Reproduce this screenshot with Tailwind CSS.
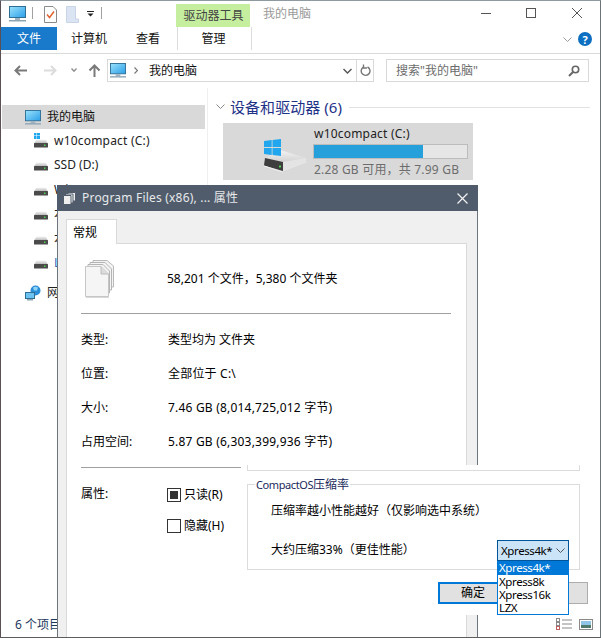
<!DOCTYPE html>
<html lang="zh-CN">
<head>
    <meta charset="UTF-8">
    <title>我的电脑</title>
    <script src="https://cdn.jsdelivr.net/npm/@tailwindcss/browser@4"></script>
</head>
<body class="bg-white">
<svg width="0" height="0" class="absolute">
    <defs>
        <linearGradient id="screen" x1="0" y1="0" x2="1" y2="1"><stop offset="0" stop-color="#9be3fb"/><stop offset="1" stop-color="#2a9ee8"/></linearGradient>
        <linearGradient id="driveTop" x1="0" y1="0" x2="0" y2="1"><stop offset="0" stop-color="#f4f4f4"/><stop offset="1" stop-color="#b5b5b5"/></linearGradient>
        <symbol id="monitor" viewBox="0 0 17 16">
            <rect x="0.5" y="0.5" width="16" height="11" fill="url(#screen)" stroke="#2f6f96"/>
            <rect x="6" y="12" width="5" height="2" fill="#9fb2bf"/>
            <rect x="0" y="14" width="17" height="1.5" fill="#8fa5b4"/>
        </symbol>
        <symbol id="drive" viewBox="0 0 14 9">
            <path d="M2.5 0.5H11.5L14 4.5H0Z" fill="url(#driveTop)"/>
            <rect x="0" y="4" width="14" height="4.5" rx="0.5" fill="#4a4a4a"/>
            <rect x="10" y="5.5" width="1.5" height="1.5" fill="#4fd04f"/>
        </symbol>
        <symbol id="pages" viewBox="0 0 30 38">
            <path d="M8 0.5H22L28.5 6V27H8Z" fill="#f3f3f3" stroke="#b9b9b9"/>
            <path d="M5 2.5H20L26.5 9V30H5Z" fill="#f5f5f5" stroke="#b4b4b4"/>
            <path d="M3 4.5H18L24.5 11V33H3Z" fill="#f3f3f3" stroke="#b4b4b4"/>
            <path d="M0.5 6.5H16L23.5 14V36.5H0.5Z" fill="#f5f5f5" stroke="#c6c6c6"/>
            <path d="M16 6.5V14H23.5" fill="#dcdcdc" stroke="#bdbdbd"/>
            <path d="M1 37.5H24" stroke="#d8d8d8"/>
        </symbol>
    </defs>
</svg>

<div class="relative w-[601px] h-[638px] overflow-hidden bg-white text-[12px] leading-none text-[#111] border-t border-t-[#8d9aa0] border-l border-l-[#5b5155] border-r border-r-[#6c7478] border-b border-b-[#5c5c5c] font-['Noto_Sans','Noto_Sans_CJK_SC',sans-serif]">

    <!-- title row -->
    <div class="flex h-[26px]">
        <svg class="ml-[8px] mt-[5px] w-[17px] h-[16px]"><use href="#monitor"/></svg>
        <div class="ml-[6px] mt-[6px] w-px h-[12px] bg-[#a0a0a0]"></div>
        <svg class="ml-[11px] mt-[5px]" width="13" height="17" viewBox="0 0 13 17">
            <path d="M0.5 0.5H9L12.5 4V16.5H0.5Z" fill="#fff" stroke="#8a8a8a"/>
            <path d="M3 8.5L5.5 11.5L10 5.5" fill="none" stroke="#e0602c" stroke-width="1.4"/>
        </svg>
        <svg class="ml-[9px] mt-[5px]" width="13" height="17" viewBox="0 0 13 17">
            <path d="M0.5 0.5H9.5V13H12.5V16.5H0.5Z" fill="#dbe4f2" stroke="#c9d4e6"/>
        </svg>
        <svg class="ml-[8px] mt-[10px]" width="7" height="6" viewBox="0 0 7 6">
            <rect x="0" y="0" width="7" height="1" fill="#222"/>
            <path d="M0.5 2.5H6.5L3.5 5.5Z" fill="#222"/>
        </svg>
        <div class="ml-[7px] mt-[6px] w-px h-[12px] bg-[#a0a0a0]"></div>
        <div class="ml-[74px] mt-[3px] w-[74px] h-[23px] bg-[#c5ee9f] flex items-center justify-center pl-[1px] text-[#444]">驱动器工具</div>
        <div class="ml-[13px] mt-[7px] text-[#9a9a9a]">我的电脑</div>
        <svg class="ml-auto mr-[18px] mt-[7px]" width="101" height="11" viewBox="0 0 101 11" fill="none" stroke="#555">
            <path d="M0 5.5H10"/>
            <rect x="45.5" y="0.5" width="9" height="9"/>
            <path d="M91 0L101 10M101 0L91 10"/>
        </svg>
    </div>

    <!-- ribbon tabs -->
    <div class="flex h-[23px] items-stretch">
        <div class="w-[56px] bg-[#1979ca] text-white flex items-center justify-center">文件</div>
        <div class="ml-[14px] w-[36px] flex items-center">计算机</div>
        <div class="ml-[29px] w-[24px] flex items-center">查看</div>
        <div class="ml-[17px] w-[75px] border-x border-[#dcdcdc] flex items-center justify-center pr-[2px]">管理</div>
        <svg class="ml-[311px] mt-[10px]" width="9" height="5" viewBox="0 0 9 5" fill="none" stroke="#9a9a9a"><path d="M0.5 0.5L4.5 4.5L8.5 0.5"/></svg>
        <div class="ml-[6px] mt-[5px] w-[14px] h-[14px] rounded-full bg-[#0d6fc2] text-white text-[11px] font-bold flex items-center justify-center">?</div>
    </div>

    <!-- nav bar -->
    <div class="mt-[3px] h-[35px] border-t border-[#dadada] flex pt-[5px]">
        <svg class="ml-[13px] mt-[6px]" width="13" height="11" viewBox="0 0 13 11" fill="none" stroke="#7a7a7a" stroke-width="2"><path d="M6 1L1.5 5.5L6 10M2 5.5H13"/></svg>
        <svg class="ml-[17px] mt-[6px]" width="13" height="11" viewBox="0 0 13 11" fill="none" stroke="#dcdcdc" stroke-width="2"><path d="M7 1L11.5 5.5L7 10M11 5.5H0"/></svg>
        <svg class="ml-[14px] mt-[9px]" width="6" height="4" viewBox="0 0 6 4" fill="none" stroke="#8a8a8a" stroke-width="1.3"><path d="M0.5 0.5L3 3.2L5.5 0.5"/></svg>
        <svg class="ml-[11px] mt-[5px]" width="13" height="13" viewBox="0 0 13 13" fill="none" stroke="#7a7a7a" stroke-width="2"><path d="M1.5 6.5L6.5 1.5L11.5 6.5M6.5 2V13"/></svg>
        <div class="ml-[6px] w-[267px] h-[23px] border border-[#d9d9d9] flex items-center">
            <svg class="ml-[2px] w-[16px] h-[15px]"><use href="#monitor"/></svg>
            <svg class="ml-[8px]" width="4" height="7" viewBox="0 0 4 7" fill="none" stroke="#777" stroke-width="1.2"><path d="M0.5 0.5L3.5 3.5L0.5 6.5"/></svg>
            <span class="ml-[11px]">我的电脑</span>
            <svg class="ml-auto mr-[4px]" width="9" height="6" viewBox="0 0 9 6" fill="none" stroke="#555" stroke-width="1.4"><path d="M0.5 1L4.5 5L8.5 1"/></svg>
            <div class="w-[17px] h-full border-l border-[#d9d9d9] flex items-center justify-center">
                <svg width="11" height="13" viewBox="0 0 11 13" fill="none" stroke="#777" stroke-width="1.4"><path d="M7.5 3A4.4 4.4 0 1 1 3 3.4M3.5 0.5V4H7"/></svg>
            </div>
        </div>
        <div class="ml-[12px] w-[203px] h-[23px] border border-[#d9d9d9] flex items-center text-[#6d6d6d]">
            <span class="ml-[9px]">搜索"我的电脑"</span>
            <svg class="ml-auto mr-[8px]" width="12" height="12" viewBox="0 0 12 12" fill="none" stroke="#666" stroke-width="1.6"><circle cx="7.5" cy="4.5" r="3.2"/><path d="M5 7L1 11" stroke-width="2"/></svg>
        </div>
    </div>

    <!-- main area -->
    <div class="flex h-[549px]">
        <!-- sidebar -->
        <div class="w-[207px] border-r border-[#efefef] pt-[17px]">
            <div class="ml-px w-[203px] h-[24px] bg-[#d9d9d9] flex items-center">
                <svg class="ml-[23px] w-[16px] h-[15px]"><use href="#monitor"/></svg>
                <span class="ml-[6px]">我的电脑</span>
            </div>
            <div class="h-[23px] flex items-center relative">
                <svg class="ml-[33px] w-[14px] h-[9px] mt-[5px]"><use href="#drive"/></svg>
                <svg class="absolute left-[33px] top-[4px]" width="6" height="6" viewBox="0 0 6 6" fill="#1ea7ef"><path d="M0 0H2.5V2.5H0ZM3 0H6V2.5H3ZM0 3H2.5V6H0ZM3 3H6V6H3Z"/></svg>
                <span class="ml-[6px] tracking-[0.2px] text-[#222]">w10compact (C:)</span>
            </div>
            <div class="h-[25px] flex items-center">
                <svg class="ml-[33px] w-[14px] h-[9px] mt-[3px]"><use href="#drive"/></svg>
                <span class="ml-[6px] text-[#222]">SSD (D:)</span>
            </div>
            <div class="h-[25px] flex items-center">
                <svg class="ml-[33px] w-[14px] h-[9px] mt-[3px]"><use href="#drive"/></svg>
                <span class="ml-[6px] text-[#222]">Win7 (E:)</span>
            </div>
            <div class="h-[24px] flex items-center">
                <svg class="ml-[33px] w-[14px] h-[9px] mt-[3px]"><use href="#drive"/></svg>
                <span class="ml-[6px] text-[#222]">本地磁盘 (F:)</span>
            </div>
            <div class="h-[25px] flex items-center">
                <svg class="ml-[33px] w-[14px] h-[9px] mt-[3px]"><use href="#drive"/></svg>
                <span class="ml-[6px] text-[#222]">本地磁盘 (G:)</span>
            </div>
            <div class="h-[24px] flex items-center">
                <svg class="ml-[33px] w-[14px] h-[9px] mt-[3px]"><use href="#drive"/></svg>
                <span class="ml-[6px] text-[#1f6fc0]">LZX (H:)</span>
            </div>
            <div class="mt-[6px] h-[24px] flex items-center">
                <svg class="ml-[24px]" width="16" height="16" viewBox="0 0 16 16">
                    <circle cx="10.5" cy="5.5" r="5" fill="#2a8fd8"/>
                    <path d="M8 2.5Q10.5 1 13 2.5L12 5.5L9 5.5Z" fill="#8fd3f5"/>
                    <rect x="0.5" y="7.5" width="9" height="6" fill="#6cc2f0" stroke="#2f6f96"/>
                    <rect x="2" y="14" width="6" height="1.5" fill="#8fa5b4"/>
                </svg>
                <span class="ml-[6px] text-[#222]">网络</span>
            </div>
        </div>

        <!-- content -->
        <div class="flex-1 pl-[7px]">
            <div class="h-[35px] flex items-center pt-[3px]">
                <svg class="ml-[1px]" width="9" height="6" viewBox="0 0 9 6" fill="none" stroke="#888"><path d="M0.5 0.5L4.5 4.5L8.5 0.5"/></svg>
                <span class="ml-[5px] text-[15px] tracking-[0.05px] text-[#1e3287]">设备和驱动器 (6)</span>
                <div class="ml-[7px] flex-1 mr-[10px] h-px bg-[#e2e2e2]"></div>
            </div>
            <div class="ml-[8px] w-[250px] h-[57px] bg-[#d9d9d9] flex">
                <div class="relative ml-[41px] mt-[16px] w-[43px] h-[33px]">
                    <svg class="absolute left-0 top-[11px]" width="43" height="23" viewBox="0 0 43 23">
                        <path d="M16 0L42 8V13L19 22L0 16L1 8Z" fill="url(#driveTop)"/>
                        <path d="M19 12L42 8V13L19 22Z" fill="#e4e4e4"/>
                        <path d="M1 8L19 12V21L0 15.5Z" fill="#3e3e3e"/>
                        <path d="M0 16L19 22" stroke="#f0f0f0"/>
                        <rect x="15" y="15.5" width="2" height="2" fill="#4fd04f"/>
                    </svg>
                    <svg class="absolute left-0 top-0" width="17" height="17" viewBox="0 0 17 17" fill="#22a7ee"><path d="M0 2L7.7 1V8H0ZM8.5 0.9L17 0V8H8.5ZM0 9H7.7V16L0 15ZM8.5 9H17V17L8.5 16Z"/></svg>
                </div>
                <div class="ml-[6px] flex-1">
                    <div class="mt-[4px] h-[14px] pl-[1px] flex items-center tracking-[0.2px] text-[#222]">w10compact (C:)</div>
                    <div class="mt-[3px] w-[155px] h-[15px] border border-[#bcbcbc] bg-[#e6e6e6]">
                        <div class="h-full bg-[#26a0da]" style="width:71%"></div>
                    </div>
                    <div class="mt-[4px] h-[14px] pl-[1px] flex items-center tracking-[0.2px] text-[#6d6d6d]">2.28 GB 可用，共 7.99 GB</div>
                </div>
            </div>
        </div>
    </div>

    <div class="absolute left-[14px] top-[618px] text-[#1e395b]">6 个项目</div>

    <!-- view toggle icons, bottom right -->
    <div class="absolute left-[555px] top-[617px] flex gap-[7px]">
        <svg width="16" height="13" viewBox="0 0 16 13" fill="none" stroke="#8a8a8a">
            <rect x="0.5" y="0.5" width="3" height="3"/><rect x="0.5" y="4.5" width="3" height="3"/><rect x="0.5" y="8.5" width="3" height="3" stroke="#c06060"/>
            <path d="M6 2H16M6 6H16M6 10H16"/>
        </svg>
        <svg width="14" height="11" viewBox="0 0 14 11" class="mt-px">
            <rect x="0.5" y="0.5" width="13" height="10" fill="#fff" stroke="#8a8a8a"/>
            <rect x="2" y="2" width="10" height="4" fill="#8fc6e8"/>
            <rect x="2" y="6" width="10" height="3" fill="#4f7a6a"/>
        </svg>
    </div>

    <!-- properties dialog -->
    <div class="absolute left-[56px] top-[184px] w-[421px] h-[460px] bg-[#f0f0f0] border-x border-[#6c7480]">
        <div class="-mx-px h-[26px] bg-[#505c6b] text-[#e6e8ea] flex items-center">
            <svg class="ml-[6px]" width="13" height="13" viewBox="0 0 13 13" fill="#eee" stroke="#505c6b">
                <path d="M5 0.5H12.5V9H5Z"/><path d="M2.5 2H10V11H2.5Z"/><path d="M0.5 3.5H8V12.5H0.5Z"/>
            </svg>
            <span class="ml-[6px] tracking-[0.2px]">Program Files (x86), ... 属性</span>
            <svg class="ml-auto mr-[10px]" width="11" height="11" viewBox="0 0 11 11" fill="none" stroke="#f2f2f2" stroke-width="1.2"><path d="M0.5 0.5L10.5 10.5M10.5 0.5L0.5 10.5"/></svg>
        </div>
        <div class="pl-[8px] pt-[8px] pr-[10px]">
            <div class="flex h-[25px]">
                <div class="relative z-10 w-[51px] h-[25px] bg-white border border-b-0 border-[#d9d9d9] flex items-center pl-[6px] pt-[2px] text-black">常规</div>
                <div class="flex-1 border-b border-[#d9d9d9]"></div>
            </div>
            <div class="h-[420px] bg-white border-x border-[#d9d9d9] text-black pl-[14px] pr-[15px]">
                <div class="h-[69px] flex items-center">
                    <svg class="ml-[4px] w-[30px] h-[38px]"><use href="#pages"/></svg>
                    <span class="ml-[52px]">58,201 个文件，5,380 个文件夹</span>
                </div>
                <div class="h-px bg-[#a0a0a0]"></div>
                <div class="mt-[9px]">
                    <div class="flex h-[34px] items-center"><span class="w-[87px]">类型:</span><span>类型均为 文件夹</span></div>
                    <div class="flex h-[34px] items-center"><span class="w-[87px]">位置:</span><span class="tracking-[0.2px]">全部位于 C:\</span></div>
                    <div class="flex h-[34px] items-center"><span class="w-[87px]">大小:</span><span class="tracking-[0.2px]">7.46 GB (8,014,725,012 字节)</span></div>
                    <div class="flex h-[33px] items-center"><span class="w-[87px]">占用空间:</span><span class="tracking-[0.2px]">5.87 GB (6,303,399,936 字节)</span></div>
                </div>
                <div class="mt-[9px] w-[160px] h-px bg-[#a0a0a0]"></div>
                <div class="mt-[20px] flex">
                    <span class="w-[86px]">属性:</span>
                    <div class="flex flex-col gap-[17px]">
                        <div class="flex items-center">
                            <div class="w-[14px] h-[14px] border border-[#333] flex items-center justify-center"><div class="w-[8px] h-[8px] bg-[#333]"></div></div>
                            <span class="ml-[3px]">只读(R)</span>
                        </div>
                        <div class="flex items-center">
                            <div class="w-[14px] h-[14px] border border-[#333]"></div>
                            <span class="ml-[3px]">隐藏(H)</span>
                        </div>
                    </div>
                </div>
            </div>
        </div>

        <!-- compression panel on top of the dialog -->
        <div class="absolute left-[183px] top-[280px] w-[351px] h-[150px] bg-white text-black">
            <div class="ml-[6px] w-[333px] h-[6px] border-x border-b border-[#dcdcdc]"></div>
            <div class="relative ml-[6px] mt-[13px] w-[333px] h-[86px] border border-[#dcdcdc]">
                <span class="absolute left-[7px] -top-[6px] bg-white px-[1px] text-[#1a2a5a]"><span class="text-[11px] tracking-[-0.4px]">CompactOS</span>压缩率</span>
                <div class="pt-[20px] pl-[23px]">压缩率越小性能越好（仅影响选中系统）</div>
                <div class="pt-[27px] pl-[23px]">大约压缩33%（更佳性能）</div>
            </div>
            <div class="ml-[197px] mt-[12px] w-[150px] h-[22px] flex">
                <div class="w-[75px] h-full bg-[#e1e1e1] border-2 border-[#0078d7] flex items-center justify-center pr-[5px]">确定</div>
                <div class="w-[75px] h-full bg-[#e1e1e1] border border-[#adadad]"></div>
            </div>
        </div>

        <!-- open combo box -->
        <div class="absolute left-[439px] top-[355px] w-[72px] text-black text-[11.5px] tracking-[-0.4px]">
            <div class="h-[21px] bg-[#cce4f7] border border-[#005499] flex items-center pl-[3px]">
                <span>Xpress4k*</span>
                <svg class="ml-auto mr-[3px]" width="9" height="5" viewBox="0 0 9 5" fill="none" stroke="#555"><path d="M0.5 0.5L4.5 4.5L8.5 0.5"/></svg>
            </div>
            <div class="h-[54px] bg-white border border-t-0 border-[#0078d7]">
                <div class="h-[14px] bg-[#0078d7] text-white flex items-center pl-[1px]">Xpress4k*</div>
                <div class="h-[13px] flex items-center pl-[1px]">Xpress8k</div>
                <div class="h-[13px] flex items-center pl-[1px]">Xpress16k</div>
                <div class="h-[13px] flex items-center pl-[1px]">LZX</div>
            </div>
        </div>
    </div>
</div>
</body>
</html>
